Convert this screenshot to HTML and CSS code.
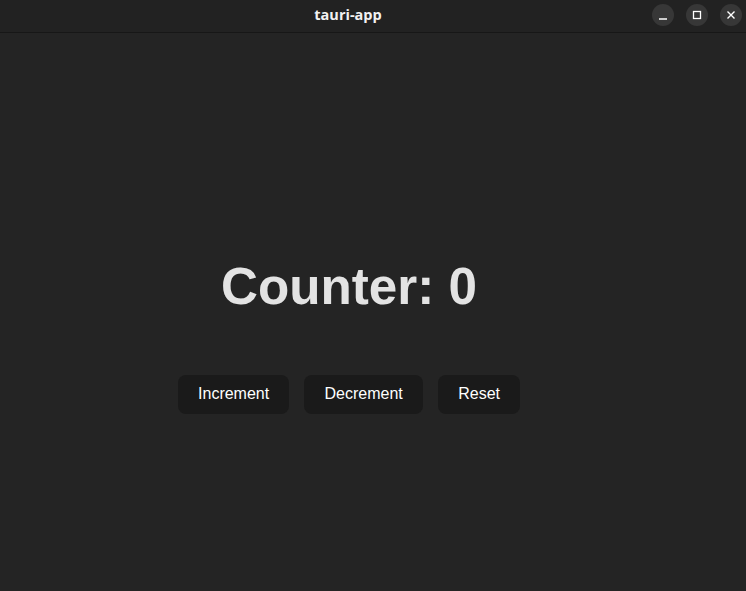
FILE: index.html
```html
<!DOCTYPE html>
<html lang="en">
<head>
<meta charset="utf-8">
<title>tauri-app</title>
<link rel="stylesheet" href="styles.css">
</head>
<body>
<div class="window">
  <header class="titlebar">
    <div class="title">tauri-app</div>
    <div class="controls">
      <span class="ctl">
        <svg width="22" height="22" viewBox="0 0 22 22"><line x1="7" y1="15" x2="15" y2="15" stroke="#ffffff" stroke-width="1.5"/></svg>
      </span>
      <span class="ctl">
        <svg width="22" height="22" viewBox="0 0 22 22"><rect x="7.5" y="7.5" width="7" height="7" fill="none" stroke="#ffffff" stroke-width="1.3"/></svg>
      </span>
      <span class="ctl">
        <svg width="22" height="22" viewBox="0 0 22 22"><path d="M7.5 7.5 L14.5 14.5 M14.5 7.5 L7.5 14.5" stroke="#ffffff" stroke-width="1.4"/></svg>
      </span>
    </div>
  </header>
  <main class="app">
    <h1 class="counter">Counter: 0</h1>
    <div class="buttons">
      <button class="btn">Increment</button>
      <button class="btn">Decrement</button>
      <button class="btn">Reset</button>
    </div>
  </main>
</div>
</body>
</html>
```
FILE: styles.css
```css
* { box-sizing: border-box; }
html, body { margin: 0; padding: 0; }
body {
  background: #242424;
  font-family: "Liberation Sans", Arial, sans-serif;
  color: rgba(255,255,255,0.87);
  width: 746px;
  height: 591px;
  overflow: hidden;
}
.window { display: flex; flex-direction: column; height: 591px; }
.titlebar {
  position: relative;
  height: 33px;
  flex: 0 0 33px;
  background: #222222;
  border-bottom: 1px solid #171717;
  display: flex;
  align-items: center;
  justify-content: center;
  padding-right: 48px;
}
.title {
  font-family: "Open Sans", "DejaVu Sans", sans-serif;
  font-weight: 700;
  font-size: 14.5px;
  color: #f2f2f2;
  margin-left: -2px;
  margin-top: -3px;
}
.controls {
  position: absolute;
  right: 4px;
  top: 4px;
  display: flex;
  gap: 12px;
}
.ctl {
  width: 22px;
  height: 22px;
  border-radius: 50%;
  background: #373737;
  display: block;
}
.ctl svg { display: block; }
.app {
  flex: 1;
  display: flex;
  flex-direction: column;
  align-items: center;
  padding-top: 226px;
  padding-right: 48px;
}
.counter {
  margin: 0;
  font-size: 51.2px;
  line-height: 1.1;
  font-weight: 700;
  color: #e3e3e3;
}
.buttons {
  margin-top: 60px;
  display: flex;
  gap: 15px;
}
.btn {
  font-family: "Liberation Sans", Arial, sans-serif;
  font-size: 16px;
  font-weight: 500;
  padding: 8px 19.2px 10px;
  height: 39px;
  border: 1px solid transparent;
  border-radius: 8px;
  background: #1a1a1a;
  color: #ffffff;
  line-height: 18px;
  cursor: pointer;
}
```
